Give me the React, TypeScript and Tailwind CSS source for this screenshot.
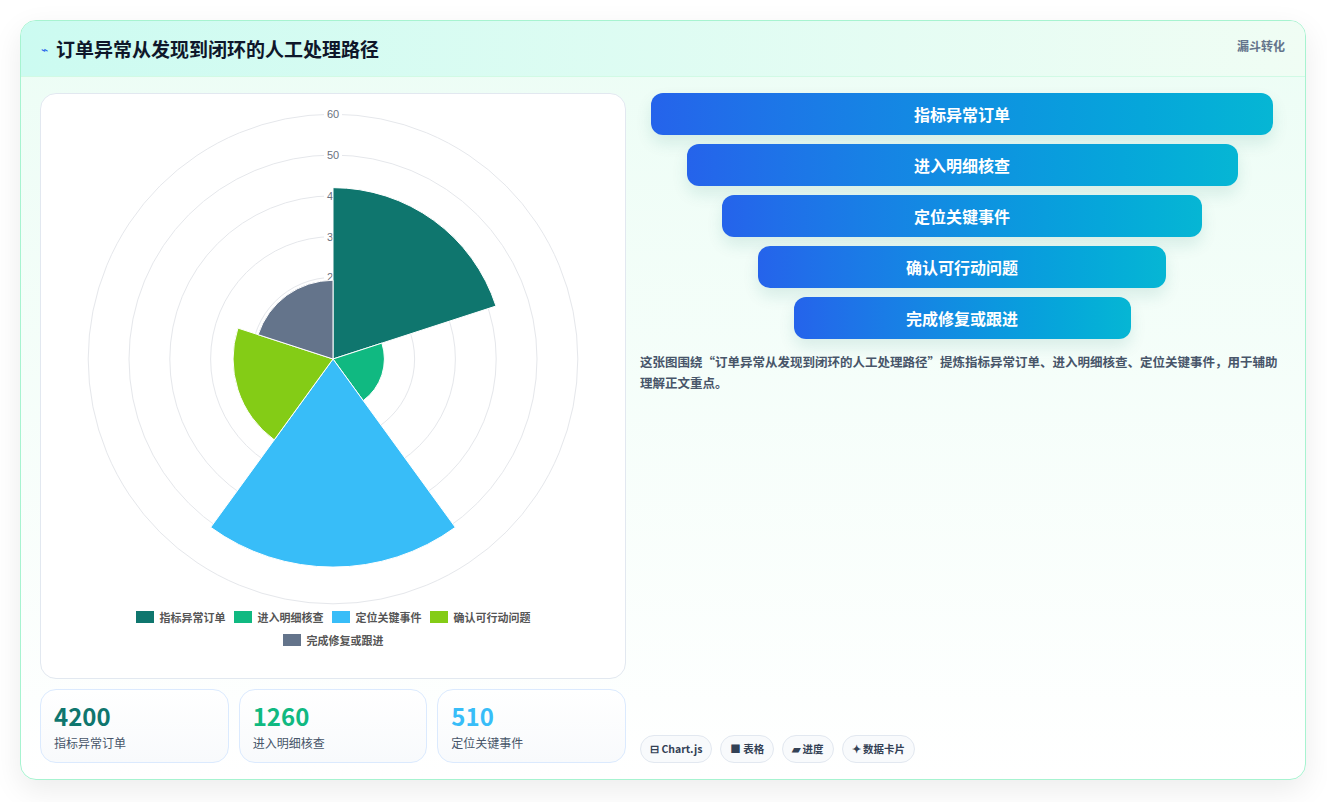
import React from 'react';

const font = { fontFamily: '"Noto Sans CJK SC", "Noto Sans", sans-serif' };

const series = [
  { label: '指标异常订单', value: 42, color: '#0f766e' },
  { label: '进入明细核查', value: 12.6, color: '#10b981' },
  { label: '定位关键事件', value: 51, color: '#38bdf8' },
  { label: '确认可行动问题', value: 24.5, color: '#84cc16' },
  { label: '完成修复或跟进', value: 19.3, color: '#64748b' },
];

const funnel = [
  { label: '指标异常订单', w: 622 },
  { label: '进入明细核查', w: 551 },
  { label: '定位关键事件', w: 480 },
  { label: '确认可行动问题', w: 408 },
  { label: '完成修复或跟进', w: 337 },
];

const stats = [
  { v: '4200', l: '指标异常订单', c: 'text-[#0f766e]' },
  { v: '1260', l: '进入明细核查', c: 'text-[#10b981]' },
  { v: '510', l: '定位关键事件', c: 'text-[#38bdf8]' },
];

const CX = 292;
const CY = 265;
const K = 4.08;

function sector(i: number, v: number) {
  const r = v * K;
  const a0 = ((-90 + i * 72) * Math.PI) / 180;
  const a1 = ((-90 + (i + 1) * 72) * Math.PI) / 180;
  const x0 = CX + r * Math.cos(a0);
  const y0 = CY + r * Math.sin(a0);
  const x1 = CX + r * Math.cos(a1);
  const y1 = CY + r * Math.sin(a1);
  return `M${CX} ${CY} L${x0} ${y0} A${r} ${r} 0 0 1 ${x1} ${y1} Z`;
}

function PolarChart() {
  return (
    <svg width="585" height="515" viewBox="0 0 585 515">
      {[1, 2, 3, 4, 5, 6].map(n => (
        <circle key={n} cx={CX} cy={CY} r={n * 10 * K} fill="none" stroke="#e5e7eb" strokeWidth="1" />
      ))}
      {[2, 3, 4, 5, 6].map(n => (
        <g key={n}>
          <rect x={CX - 9} y={CY - n * 10 * K - 7} width="18" height="13" fill="white" />
          <text x={CX} y={CY - n * 10 * K + 4} textAnchor="middle" fontSize="11" fill="#6b7280" fontFamily="Liberation Sans, sans-serif">
            {n * 10}
          </text>
        </g>
      ))}
      {series.map((s, i) => (
        <path key={i} d={sector(i, s.value)} fill={s.color} stroke="white" strokeWidth="1" />
      ))}
    </svg>
  );
}

export default function App() {
  return (
    <div className="w-[1327px] h-[802px] bg-white p-5" style={font}>
      <div className="w-[1286px] h-[760px] rounded-2xl border border-[#a7f3d0] bg-gradient-to-b from-[#ecfdf5] to-white shadow-[0_10px_30px_rgba(0,0,0,0.08)] flex flex-col overflow-hidden">
        <div className="h-[56px] shrink-0 flex items-start justify-between px-5 border-b border-[#d1fae5] bg-gradient-to-r from-[#ccfbf1] to-[#f0fdf4]">
          <div className="flex items-center gap-2 h-[56px]">
            <span className="text-[#2563eb] text-[12px]">⌁</span>
            <span className="text-[19px] font-bold text-[#0f172a]">订单异常从发现到闭环的人工处理路径</span>
          </div>
          <span className="mt-[16px] text-[12px] font-bold text-[#64748b]">漏斗转化</span>
        </div>
        <div className="flex-1 flex gap-[14px] px-[19px] pt-[16px] pb-[18px]">
          <div className="w-[586px] flex flex-col gap-[10px]">
            <div className="h-[586px] rounded-2xl border border-[#e2e8f0] bg-white flex flex-col items-center">
              <PolarChart />
              <div className="flex flex-wrap justify-center gap-x-[8px] gap-y-[6px] w-[460px] text-[11px] font-bold text-[#555]">
                {series.map(s => (
                  <div key={s.label} className="flex items-center gap-[6px]">
                    <span className="w-[18px] h-[12px] inline-block" style={{ background: s.color }} />
                    {s.label}
                  </div>
                ))}
              </div>
            </div>
            <div className="grid grid-cols-3 gap-[10px]">
              {stats.map(s => (
                <div key={s.v} className="h-[74px] rounded-2xl border border-[#dbeafe] bg-gradient-to-b from-white to-[#f8fafc] px-[13px] pt-[10px]">
                  <div className={`text-[24px] font-bold leading-[32px] ${s.c}`}>{s.v}</div>
                  <div className="text-[12px] text-[#475569] mt-[2px]">{s.l}</div>
                </div>
              ))}
            </div>
          </div>
          <div className="flex-1 flex flex-col">
            <div className="flex flex-col items-center gap-[9px] pr-[2px]">
              {funnel.map(f => (
                <div
                  key={f.label}
                  className="h-[42px] rounded-xl bg-gradient-to-r from-[#2563eb] to-[#06b6d4] text-white font-bold text-[16px] flex items-center justify-center shadow-[0_8px_16px_rgba(15,118,110,0.12)]"
                  style={{ width: f.w }}
                >
                  {f.label}
                </div>
              ))}
            </div>
            <p className="mt-[12px] text-[12.5px] font-bold leading-[21px] text-[#475569]">
              这张图围绕“订单异常从发现到闭环的人工处理路径”提炼指标异常订单、进入明细核查、定位关键事件，用于辅助理解正文重点。
            </p>
            <div className="mt-auto flex gap-[8px] text-[10.5px] font-bold text-[#334155]">
              {['⊟ Chart.js', '■ 表格', '▰ 进度', '✦ 数据卡片'].map(c => (
                <span key={c} className="h-[28px] px-[9px] rounded-full border border-[#e2e8f0] bg-[#f8fafc] flex items-center">
                  {c}
                </span>
              ))}
            </div>
          </div>
        </div>
      </div>
    </div>
  );
}
